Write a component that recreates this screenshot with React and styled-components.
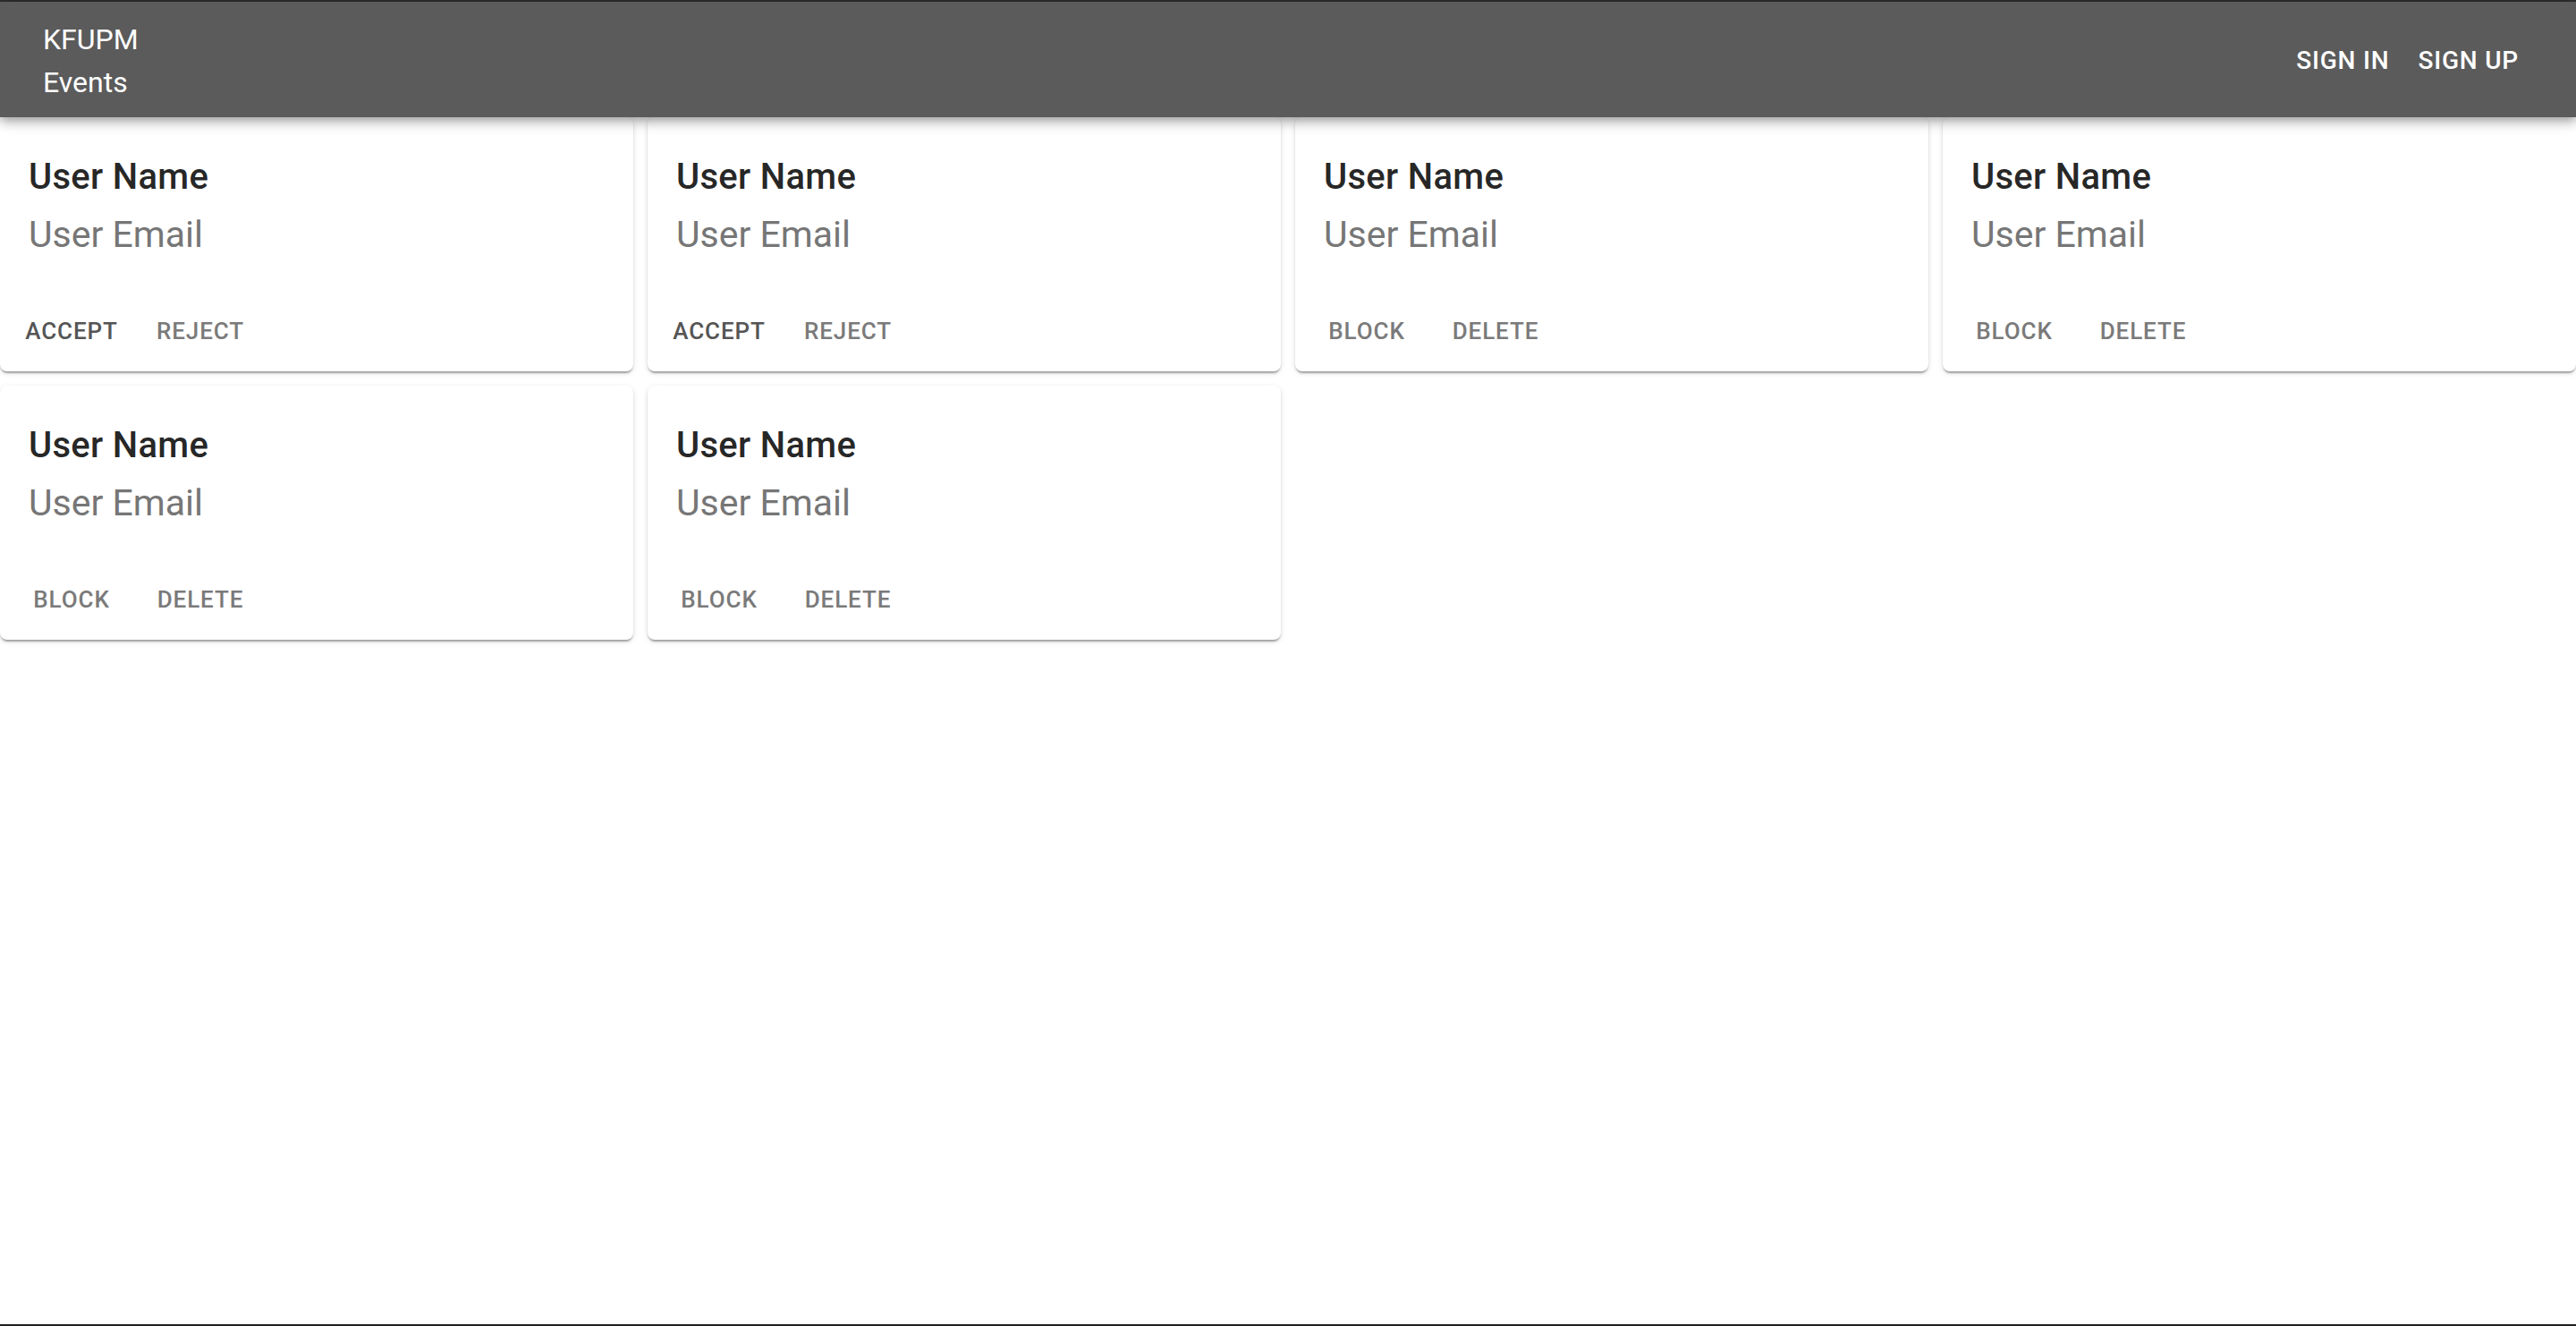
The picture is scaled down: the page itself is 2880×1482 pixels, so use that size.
import React from "react";
import styled, { createGlobalStyle } from "styled-components";

const Global = createGlobalStyle`
  * { box-sizing: border-box; }
  html, body { margin: 0; padding: 0; background: #fff; }
  body { font-family: Roboto, "Noto Sans", Arial, sans-serif; -webkit-font-smoothing: antialiased; }
`;

const Page = styled.div`
  min-height: 100vh;
  display: flex;
  flex-direction: column;
  border-top: 2px solid #2d2d2d;
  border-bottom: 2px solid #1e1e1e;
`;

const AppBar = styled.header`
  position: relative;
  z-index: 2;
  height: 129px;
  background: #5b5b5b;
  color: #fff;
  display: flex;
  align-items: center;
  justify-content: space-between;
  padding: 2px 48px 0;
  box-shadow: 0px 4px 8px -2px rgba(0,0,0,0.2), 0px 8px 10px 0px rgba(0,0,0,0.14), 0px 2px 20px 0px rgba(0,0,0,0.12);
`;

const Brand = styled.div`
  font-size: 32px;
  line-height: 48px;
  font-weight: 400;
  width: 120px;
`;

const NavGroup = styled.nav`
  display: flex;
  align-items: center;
`;

const NavButton = styled.button`
  background: none;
  border: 0;
  color: #fff;
  font-family: inherit;
  font-size: 28px;
  font-weight: 500;
  letter-spacing: 0.8px;
  line-height: 48px;
  text-transform: uppercase;
  padding: 12px 16px;
  min-width: 128px;
  border-radius: 8px;
  cursor: pointer;
`;

const Grid = styled.main`
  display: grid;
  grid-template-columns: repeat(4, 1fr);
  gap: 16px;
  padding-top: 0;
  align-content: start;
`;

const Card = styled.div`
  background: #fff;
  border-radius: 8px;
  box-shadow: 0px 4px 2px -2px rgba(0,0,0,0.2), 0px 2px 2px 0px rgba(0,0,0,0.14), 0px 2px 6px 0px rgba(0,0,0,0.12);
  overflow: hidden;
`;

const Content = styled.div`
  padding: 35px 32px 29px;
`;

const Name = styled.div`
  font-size: 40px;
  line-height: 64px;
  font-weight: 500;
  letter-spacing: 0.3px;
  color: rgba(0,0,0,0.87);
`;

const Email = styled.div`
  font-size: 41px;
  line-height: 64px;
  font-weight: 400;
  color: #767676;
`;

const Actions = styled.div`
  display: flex;
  align-items: center;
  padding: 17px 16px 15px;
  gap: 16px;
`;

const ActionButton = styled.button`
  background: none;
  border: 0;
  font-family: inherit;
  font-size: 26px;
  font-weight: 500;
  letter-spacing: 0.9px;
  line-height: 44px;
  text-transform: uppercase;
  padding: 8px 10px;
  min-width: 128px;
  border-radius: 8px;
  color: ${(p) => (p.$strong ? "#555555" : "#7a7a7a")};
  cursor: pointer;
`;

const users = [
  { actions: [{ label: "Accept", strong: true }, { label: "Reject" }] },
  { actions: [{ label: "Accept", strong: true }, { label: "Reject" }] },
  { actions: [{ label: "Block" }, { label: "Delete" }] },
  { actions: [{ label: "Block" }, { label: "Delete" }] },
  { actions: [{ label: "Block" }, { label: "Delete" }] },
  { actions: [{ label: "Block" }, { label: "Delete" }] },
];

export default function App() {
  return (
    <Page>
      <Global />
      <AppBar>
        <Brand>KFUPM Events</Brand>
        <NavGroup>
          <NavButton>Sign In</NavButton>
          <NavButton>Sign Up</NavButton>
        </NavGroup>
      </AppBar>
      <Grid>
        {users.map((u, i) => (
          <Card key={i}>
            <Content>
              <Name>User Name</Name>
              <Email>User Email</Email>
            </Content>
            <Actions>
              {u.actions.map((a) => (
                <ActionButton key={a.label} $strong={a.strong}>
                  {a.label}
                </ActionButton>
              ))}
            </Actions>
          </Card>
        ))}
      </Grid>
    </Page>
  );
}
